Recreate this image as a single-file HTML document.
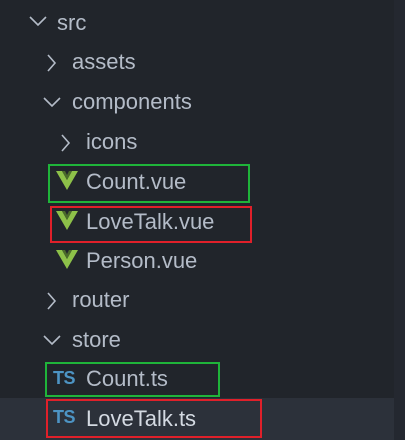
<!DOCTYPE html>
<html><head><meta charset="utf-8"><style>
html,body{margin:0;padding:0}
body{width:405px;height:440px;background:#21252b;position:relative;overflow:hidden;font-family:"Liberation Sans",sans-serif;}
.t{position:absolute;font-size:22px;color:#b4bcc8;line-height:24px;white-space:nowrap}
.hov{position:absolute;left:0;top:398px;width:394px;height:42px;background:#2c313a}
.sb{position:absolute;left:394px;top:0;width:11px;height:440px;background:#242830}
.box{position:absolute;border:2px solid;box-sizing:border-box}
.g{border-color:#1fb43a}.r{border-color:#e0202a}
svg{position:absolute}
.ts{position:absolute;font-size:18px;font-weight:bold;color:#4d94c4;line-height:18px;letter-spacing:-0.5px}
</style></head><body>
<div class="sb"></div>
<div class="hov"></div>

<svg style="left:29px;top:16px" width="18" height="12"><path d="M1 1 L9 9 L17 1" stroke="#b4bcc8" stroke-width="1.6" fill="none"/></svg>
<div class="t" style="left:57px;top:11px">src</div>

<svg style="left:47px;top:54px" width="10" height="18"><path d="M1 1 L8 9 L1 17" stroke="#b4bcc8" stroke-width="1.6" fill="none"/></svg>
<div class="t" style="left:72px;top:50px">assets</div>

<svg style="left:43px;top:97px" width="18" height="12"><path d="M1 1 L9 9 L17 1" stroke="#b4bcc8" stroke-width="1.6" fill="none"/></svg>
<div class="t" style="left:72px;top:90px">components</div>

<svg style="left:61px;top:134px" width="10" height="18"><path d="M1 1 L8 9 L1 17" stroke="#b4bcc8" stroke-width="1.6" fill="none"/></svg>
<div class="t" style="left:86px;top:130px">icons</div>

<svg style="left:56px;top:171px" width="22" height="19" viewBox="0 0 22 19"><path d="M0 0 H6 L11 9 L16 0 H22 L11 19 Z" fill="#8dc149"/><path d="M6 0 L11 9 L16 0 H13 L11 4 L9 0Z" fill="#4a6a2a"/></svg>
<div class="t" style="left:86px;top:170px">Count.vue</div>
<div class="box g" style="left:48px;top:164px;width:202px;height:39px"></div>

<svg style="left:56px;top:211px" width="22" height="19" viewBox="0 0 22 19"><path d="M0 0 H6 L11 9 L16 0 H22 L11 19 Z" fill="#8dc149"/><path d="M6 0 L11 9 L16 0 H13 L11 4 L9 0Z" fill="#4a6a2a"/></svg>
<div class="t" style="left:86px;top:210px">LoveTalk.vue</div>
<div class="box r" style="left:50px;top:206px;width:202px;height:37px"></div>

<svg style="left:56px;top:250px" width="22" height="19" viewBox="0 0 22 19"><path d="M0 0 H6 L11 9 L16 0 H22 L11 19 Z" fill="#8dc149"/><path d="M6 0 L11 9 L16 0 H13 L11 4 L9 0Z" fill="#4a6a2a"/></svg>
<div class="t" style="left:86px;top:249px">Person.vue</div>

<svg style="left:47px;top:292px" width="10" height="18"><path d="M1 1 L8 9 L1 17" stroke="#b4bcc8" stroke-width="1.6" fill="none"/></svg>
<div class="t" style="left:72px;top:288px">router</div>

<svg style="left:43px;top:335px" width="18" height="12"><path d="M1 1 L9 9 L17 1" stroke="#b4bcc8" stroke-width="1.6" fill="none"/></svg>
<div class="t" style="left:72px;top:328px">store</div>

<div class="ts" style="left:53px;top:369px">TS</div>
<div class="t" style="left:86px;top:367px">Count.ts</div>
<div class="box g" style="left:45px;top:362px;width:175px;height:35px"></div>

<div class="ts" style="left:53px;top:408px">TS</div>
<div class="t" style="left:86px;top:407px;color:#d4dae2">LoveTalk.ts</div>
<div class="box r" style="left:46px;top:399px;width:216px;height:39px"></div>
</body></html>
